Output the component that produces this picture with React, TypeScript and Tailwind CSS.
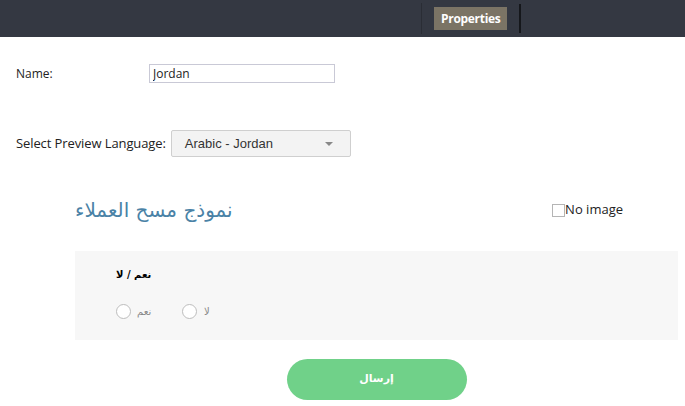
const App = () => {
  return (
    <div className="w-[685px] h-[406px] bg-white overflow-hidden font-['Open_Sans',sans-serif] text-[#222]">
      {/* top bar */}
      <div className="h-[37px] bg-[#343842] flex items-stretch pl-[421px]">
        <div className="w-px bg-[#2a2d35] my-[3px]" />
        <div className="flex items-center pl-[12px] pr-[12px]">
          <span className="bg-[#7b7465] text-white text-[12px] font-bold px-[7px] h-[23px] leading-[23px] tracking-[-0.3px]">
            Properties
          </span>
        </div>
        <div className="w-[2px] bg-[#15171b] my-[4px]" />
      </div>

      <div className="pl-[16px]">
        {/* name row */}
        <div className="flex items-center mt-[27px] h-[19px]">
          <label className="w-[133px] text-[12px]">Name:</label>
          <input
            defaultValue="Jordan"
            className="w-[186px] h-[19px] border border-[#c9c9d6] px-[3px] text-[12px] outline-none"
          />
        </div>

        {/* language row */}
        <div className="flex items-center mt-[47px] h-[27px]">
          <label className="text-[13px] mr-[5px] tracking-[-0.1px]">Select Preview Language:</label>
          <div className="w-[180px] h-[27px] bg-[#f3f3f3] border border-[#cfcfcf] rounded-[2px] flex items-center pl-[13px] pr-[17px] justify-between">
            <span className="font-['Liberation_Sans',sans-serif] text-[13px] text-[#333]">Arabic - Jordan</span>
            <span className="w-0 h-0 border-l-[4px] border-r-[4px] border-t-[4px] border-l-transparent border-r-transparent border-t-[#888]" />
          </div>
        </div>
      </div>

      {/* survey preview */}
      <div className="ml-[75px] mr-[7px] mt-[38px]">
        <div className="flex items-center justify-between h-[30px]">
          <h2 className="font-['DejaVu_Sans',serif] text-[20px] text-[#4a82a6] leading-none" dir="rtl">
            نموذج مسح العملاء
          </h2>
          <label className="flex items-center mr-[55px] text-[13px] text-[#222]">
            <span className="w-[13px] h-[13px] border border-[#b5b5b5] bg-white" />
            No image
          </label>
        </div>

        <div className="mt-[26px] h-[89px] bg-[#f7f7f7] pl-[41px] pt-[17px]">
          <div className="flex">
            <div className="font-['DejaVu_Sans',sans-serif] text-[10px] font-bold text-black leading-[14px]" dir="rtl">
              نعم / لا
            </div>
          </div>
          <div className="flex items-center mt-[22px] text-[10px] text-[#888] font-['DejaVu_Sans',sans-serif]">
            <span className="w-[15px] h-[15px] rounded-full border border-[#bdbdbd] bg-white" />
            <span className="ml-[6px] w-[45px]">نعم</span>
            <span className="w-[15px] h-[15px] rounded-full border border-[#bdbdbd] bg-white" />
            <span className="ml-[7px]">لا</span>
          </div>
        </div>

        <div className="flex justify-center mt-[19px]">
          <button className="w-[180px] h-[41px] rounded-full bg-[#70d189] text-white text-[11px] font-bold font-['DejaVu_Sans',sans-serif]">
            إرسال
          </button>
        </div>
      </div>
    </div>
  );
};

export default App;
